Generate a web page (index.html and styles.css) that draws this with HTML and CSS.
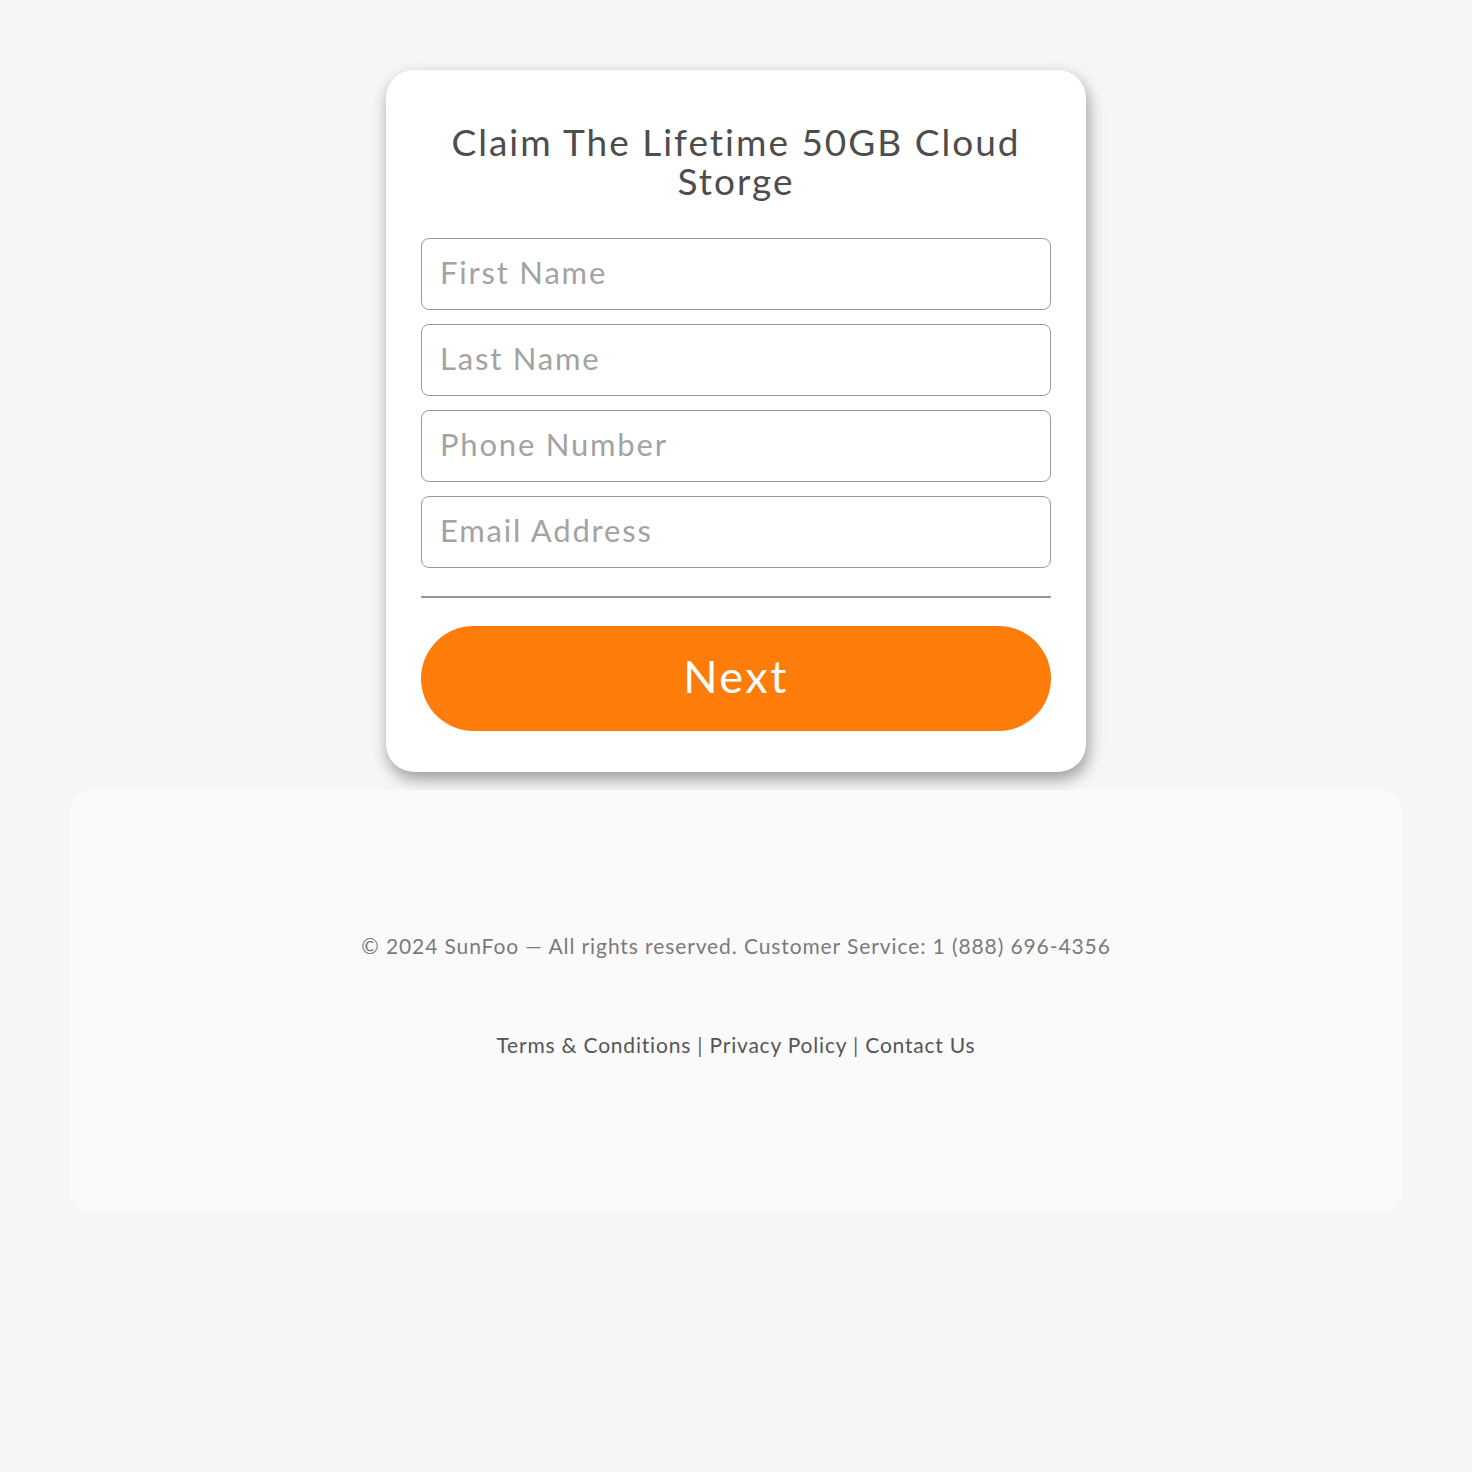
FILE: index.html
```html
<!DOCTYPE html>
<html lang="en">
<head>
<meta charset="utf-8">
<title>Claim The Lifetime 50GB Cloud Storge</title>
<link rel="stylesheet" href="styles.css">
</head>
<body>
<main class="page">
  <section class="card">
    <h1 class="title">Claim The Lifetime 50GB Cloud Storge</h1>
    <form class="form">
      <input class="field" type="text" placeholder="First Name">
      <input class="field" type="text" placeholder="Last Name">
      <input class="field" type="tel" placeholder="Phone Number">
      <input class="field" type="email" placeholder="Email Address">
      <hr class="divider">
      <button class="next" type="button">Next</button>
    </form>
  </section>
  <footer class="footer">
    <p class="copy">© 2024 SunFoo — All rights reserved. Customer Service: 1 (888) 696-4356</p>
    <p class="links"><a href="#">Terms &amp; Conditions</a> | <a href="#">Privacy Policy</a> | <a href="#">Contact Us</a></p>
  </footer>
</main>
</body>
</html>
```

FILE: styles.css
```css
html, body {
  margin: 0;
  padding: 0;
  background: #f6f6f6;
  font-family: "Lato", "Noto Sans", sans-serif;
}
.page {
  padding: 70px 70px 0;
  display: flex;
  flex-direction: column;
  align-items: center;
}
.card {
  width: 700px;
  box-sizing: border-box;
  background: #fff;
  border-radius: 28px;
  padding: 52px 35px 41px;
  box-shadow: 2px 7px 16px rgba(0,0,0,0.38);
}
.title {
  margin: 0 0 38px;
  font-size: 37px;
  line-height: 39px;
  font-weight: 400;
  color: #4d4d4d;
  text-align: center;
  letter-spacing: 2px;
}
.form {
  display: flex;
  flex-direction: column;
  gap: 14px;
  margin: 0;
}
.field {
  height: 72px;
  box-sizing: border-box;
  border: 1px solid #9a9a9a;
  border-radius: 8px;
  padding: 0 18px 4px;
  font-family: inherit;
  font-size: 31px;
  letter-spacing: 1.8px;
  color: #444;
  background: #fff;
  outline: none;
}
.field::placeholder {
  color: #a3a3a3;
}
.divider {
  margin: 14px 0 14px;
  border: 0;
  height: 2px;
  background: #959595;
}
.next {
  height: 105px;
  border: 0;
  border-radius: 53px;
  padding: 0 0 5px;
  background: #fd7c0a;
  color: #fff;
  font-family: inherit;
  font-size: 45px;
  letter-spacing: 2.5px;
  cursor: pointer;
}
.footer {
  margin-top: 18px;
  width: 1332px;
  height: 422px;
  box-sizing: border-box;
  background: #fafafa;
  border-radius: 20px;
  padding-top: 142px;
  text-align: center;
}
.copy {
  margin: 0;
  font-size: 21px;
  line-height: 28px;
  letter-spacing: 0.9px;
  color: #7a7a7a;
}
.links {
  margin: 71px 0 0;
  font-size: 21px;
  line-height: 28px;
  letter-spacing: 0.8px;
  color: #666;
}
.links a {
  color: #555;
  text-decoration: none;
}
```
